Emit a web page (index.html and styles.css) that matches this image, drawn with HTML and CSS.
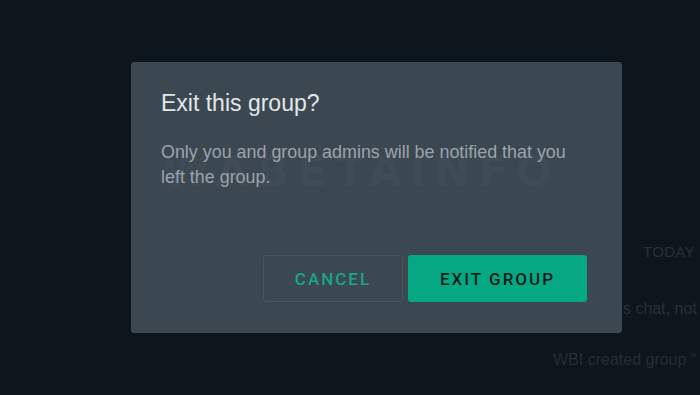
FILE: index.html
```html
<!DOCTYPE html>
<html lang="en">
<head>
<meta charset="utf-8">
<title>Exit this group?</title>
<link rel="stylesheet" href="styles.css">
</head>
<body>
<div class="chat">
  <div class="today">TODAY</div>
  <div class="sys sys-enc">s chat, not</div>
  <div class="sys sys-created">WBI created group “</div>
</div>
<div class="dialog" role="dialog" aria-labelledby="dlg-title">
  <div class="watermark" aria-hidden="true">WABETAINFO</div>
  <h1 class="title" id="dlg-title">Exit this group?</h1>
  <p class="body">Only you and group admins will be notified that you left the group.</p>
  <div class="actions">
    <button class="btn btn-cancel">CANCEL</button>
    <button class="btn btn-exit">EXIT GROUP</button>
  </div>
</div>
</body>
</html>
```
FILE: styles.css
```css
html, body {
  margin: 0;
  padding: 0;
}
body {
  width: 700px;
  height: 395px;
  overflow: hidden;
  background: #0e161d;
  font-family: "Liberation Sans", Arial, sans-serif;
  position: relative;
}
.chat {
  display: flex;
  flex-direction: column;
  padding-top: 243px;
  white-space: nowrap;
  color: #283138;
}
.today {
  margin-left: 643px;
  font-size: 15px;
  letter-spacing: 0.3px;
}
.sys {
  font-size: 16px;
}
.sys-enc {
  margin-left: 623px;
  margin-top: 40px;
}
.sys-created {
  margin-left: 553px;
  margin-top: 33px;
  color: #252e35;
}
.dialog {
  position: absolute;
  left: 131px;
  top: 62px;
  width: 491px;
  height: 271px;
  box-sizing: border-box;
  padding: 26px 35px 31px 30px;
  background: #3b4751;
  border-radius: 3px;
  display: flex;
  flex-direction: column;
  overflow: hidden;
}
.watermark {
  position: absolute;
  left: 31px;
  top: 88px;
  font-family: "DejaVu Sans", sans-serif;
  font-size: 43px;
  font-weight: bold;
  letter-spacing: 8px;
  color: #3f4b56;
  line-height: 43px;
}
.title {
  position: relative;
  margin: 0;
  font-size: 23px;
  font-weight: normal;
  line-height: 30px;
  color: #e2e6e9;
}
.body {
  position: relative;
  margin: 22px 0 0;
  font-size: 17.9px;
  line-height: 25px;
  color: #9ba4ab;
}
.actions {
  position: relative;
  margin-top: auto;
  display: flex;
  justify-content: flex-end;
  gap: 5px;
}
.btn {
  height: 47px;
  box-sizing: border-box;
  border-radius: 3px;
  font-family: Roboto, "Liberation Sans", sans-serif;
  font-weight: 500;
  font-size: 17px;
  letter-spacing: 2px;
  padding: 0;
  cursor: pointer;
}
.btn-cancel {
  width: 140px;
  background: transparent;
  border: 1px solid #4a555e;
  color: #19a584;
}
.btn-exit {
  width: 179px;
  background: #06a884;
  border: none;
  color: #0c1e1a;
}
```
